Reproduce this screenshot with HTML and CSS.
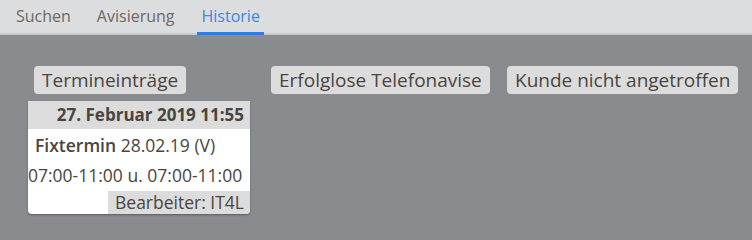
FILE: index.html
```html
<!DOCTYPE html>
<html lang="de">
<head>
<meta charset="utf-8">
<link rel="stylesheet" href="styles.css">
</head>
<body>
<nav class="tabs">
  <div class="tab">Suchen</div>
  <div class="tab">Avisierung</div>
  <div class="tab active">Historie</div>
</nav>
<main class="content">
  <section class="col">
    <div class="label">Termineinträge</div>
    <div class="card">
      <div class="card-head">27. Februar 2019 11:55</div>
      <div class="card-line first"><b class="kind">Fixtermin</b> 28.02.19 (V)</div>
      <div class="card-line second">07:00-11:00 u. 07:00-11:00</div>
      <div class="card-foot"><span>Bearbeiter: IT4L</span></div>
    </div>
  </section>
  <section class="col">
    <div class="label">Erfolglose Telefonavise</div>
  </section>
  <section class="col">
    <div class="label">Kunde nicht angetroffen</div>
  </section>
</main>
</body>
</html>
```
FILE: styles.css
```css
html, body {
  margin: 0;
  padding: 0;
}
body {
  width: 752px;
  height: 228px;
  overflow: hidden;
  background: #8a8b8e;
  font-family: "Open Sans", "Noto Sans", sans-serif;
  color: #4a4540;
}
.tabs {
  display: flex;
  height: 33px;
  background: #dcdddf;
  border-bottom: 2px solid #c9cacc;
  padding-left: 3px;
}
.tab {
  font-size: 16px;
  color: #6e6862;
  padding: 4px 13px 0;
  line-height: 24px;
  border-bottom: 3px solid transparent;
  margin-bottom: -2px;
  white-space: nowrap;
}
.tab.active {
  color: #3f86e0;
  border-bottom-color: #2f7de0;
  padding: 4px 4px 0 5px;
  margin-left: 9px;
}
.content {
  display: flex;
  gap: 14px;
  padding: 31px 0 0 28px;
}
.col {
  width: 222px;
  display: flex;
  flex-direction: column;
  align-items: flex-start;
}
.label {
  margin-left: 6px;
  background: #dcdcdc;
  border-radius: 4px;
  font-size: 19px;
  line-height: 28px;
  height: 28px;
  padding: 0 8px;
  white-space: nowrap;
  color: #4a4540;
}
.col:nth-child(2) .label,
.col:nth-child(3) .label {
  margin-left: 7px;
}
.card {
  margin-top: 7px;
  width: 222px;
  background: #fff;
  border-radius: 0 0 4px 4px;
  box-shadow: 0 1px 2px rgba(0,0,0,0.35);
  overflow: hidden;
}
.card-head {
  background: #dcdcdc;
  font-weight: bold;
  font-size: 17px;
  line-height: 28px;
  height: 28px;
  text-align: right;
  padding-right: 6px;
  white-space: nowrap;
}
.card-line {
  font-size: 17.5px;
  line-height: 30px;
  white-space: nowrap;
}
.card-line.first {
  padding-left: 7px;
  padding-top: 1px;
}
.kind {
  font-weight: 600;
}
.card-line.second {
  padding-left: 0;
}
.card-foot {
  display: flex;
  justify-content: flex-end;
  margin-top: 1px;
}
.card-foot span {
  background: #dcdcdc;
  font-size: 17.5px;
  line-height: 23px;
  padding: 0 6px 0 7px;
  width: 129px;
  text-align: right;
  white-space: nowrap;
}
```
